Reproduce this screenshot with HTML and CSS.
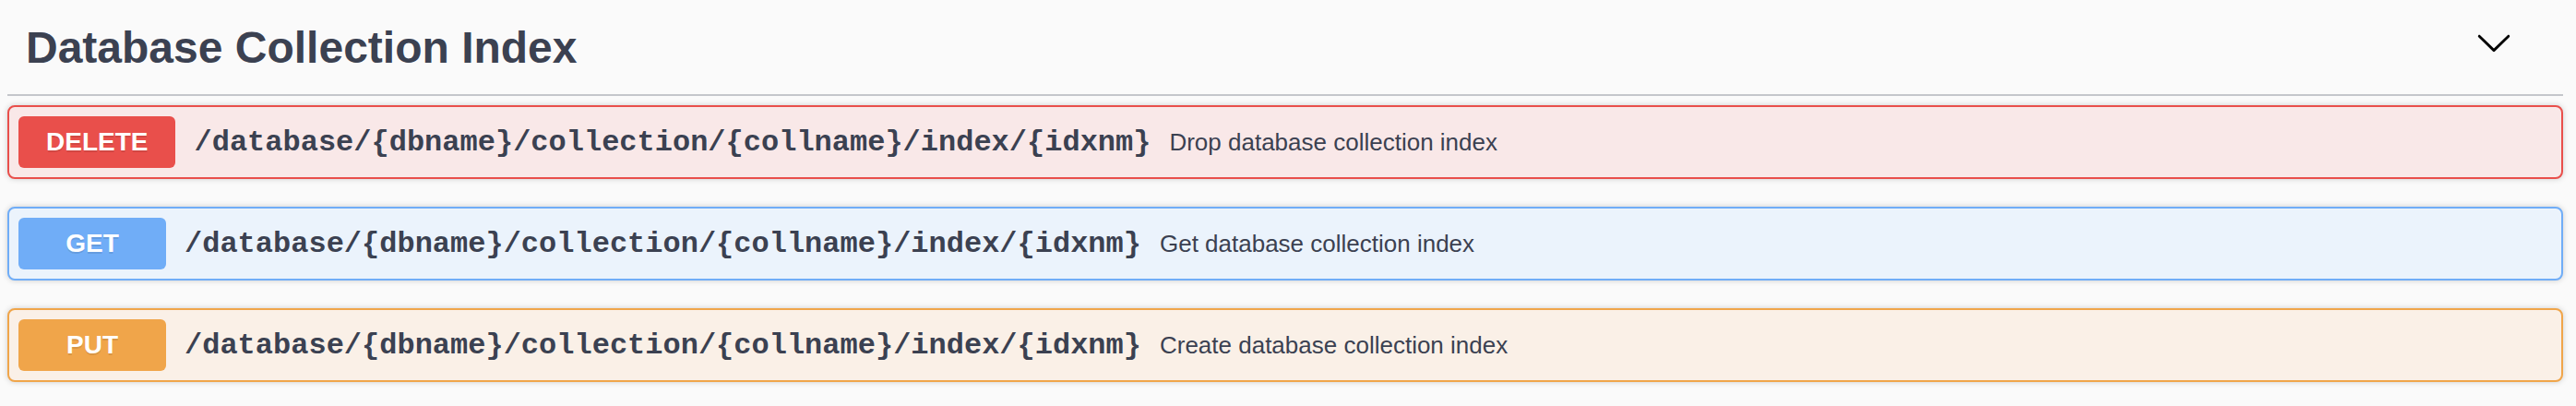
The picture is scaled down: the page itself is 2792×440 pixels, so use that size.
FILE: index.html
```html
<!DOCTYPE html>
<html lang="en">
<head>
<meta charset="utf-8">
<title>Database Collection Index</title>
<link rel="stylesheet" href="styles.css">
</head>
<body>
<div class="tag-section">
  <h4 class="opblock-tag">
    <span class="tag-title">Database Collection Index</span>
    <svg class="arrow" viewBox="0 0 20 20" aria-hidden="true"><path d="M17.418 6.109c.272-.268.709-.268.979 0s.271.701 0 .969l-7.908 7.83c-.27.268-.707.268-.979 0l-7.908-7.83c-.27-.268-.27-.701 0-.969.271-.268.709-.268.979 0L10 13.25l7.418-7.141z"/></svg>
  </h4>
  <div class="operations">
    <div class="opblock opblock-delete">
      <span class="method">DELETE</span>
      <span class="path">/database/{dbname}/collection/{collname}/index/{idxnm}</span>
      <span class="desc">Drop database collection index</span>
    </div>
    <div class="opblock opblock-get">
      <span class="method">GET</span>
      <span class="path">/database/{dbname}/collection/{collname}/index/{idxnm}</span>
      <span class="desc">Get database collection index</span>
    </div>
    <div class="opblock opblock-put">
      <span class="method">PUT</span>
      <span class="path">/database/{dbname}/collection/{collname}/index/{idxnm}</span>
      <span class="desc">Create database collection index</span>
    </div>
  </div>
</div>
</body>
</html>
```
FILE: styles.css
```css
html, body {
  margin: 0;
  background: #fafafa;
}
body {
  font-family: "Liberation Sans", Arial, sans-serif;
  color: #3b4151;
}
.tag-section {
  margin: 0 14px 0 8px;
}
.opblock-tag {
  display: flex;
  align-items: center;
  margin: 0 0 10px;
  padding: 23px 55px 21px 20px;
  border-bottom: 2px solid #c4c6cb;
  font-size: 48px;
  line-height: 58px;
  font-weight: 700;
  color: #3b4151;
}
.tag-title {
  flex: 1 1 auto;
}
.arrow {
  width: 40px;
  height: 40px;
  margin-bottom: 12px;
  fill: #000;
}
.opblock {
  display: flex;
  align-items: center;
  padding: 10px;
  border: 2px solid #000;
  border-radius: 8px;
  margin: 0 0 30px;
  box-shadow: 0 0 6px rgba(0, 0, 0, .19);
}
.method {
  box-sizing: border-box;
  min-width: 160px;
  padding: 12px 30px;
  font-size: 28px;
  line-height: 32px;
  font-weight: 700;
  text-align: center;
  color: #fff;
  border-radius: 6px;
  text-shadow: 0 2px 0 rgba(0, 0, 0, .1);
}
.path {
  padding: 0 20px;
  font-family: "Liberation Mono", "Courier New", monospace;
  font-weight: 700;
  font-size: 32px;
  color: #3b4151;
}
.desc {
  flex: 1 1 auto;
  font-size: 26px;
  color: #3b4151;
}
.opblock-delete {
  border-color: #e94f4b;
  background: #f9e8e8;
}
.opblock-delete .method {
  background: #e94f4b;
}
.opblock-get {
  border-color: #70adf7;
  background: #ebf3fc;
}
.opblock-get .method {
  background: #70adf7;
}
.opblock-put {
  border-color: #f0a54a;
  background: #faf0e7;
}
.opblock-put .method {
  background: #f0a54a;
}
```
